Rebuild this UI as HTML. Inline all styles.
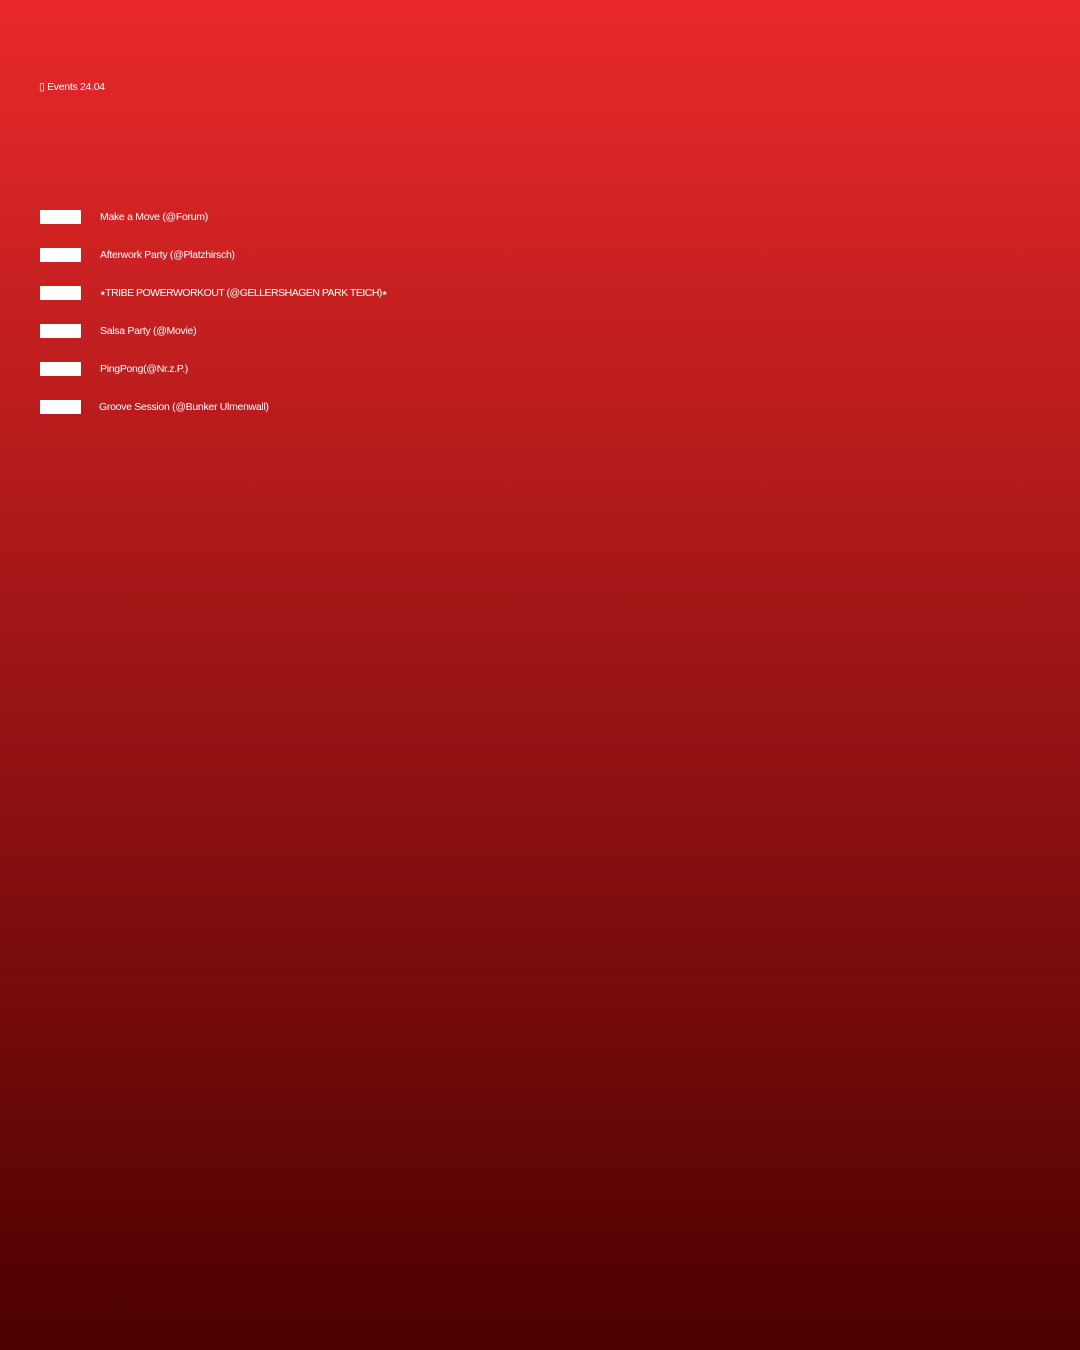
<!DOCTYPE html>
<html><head><style>
body{margin:0;width:1080px;height:1350px;background:linear-gradient(#ea292a,#4c0000);font-family:"Liberation Sans",sans-serif;color:#fff;position:relative;overflow:hidden}
.t{position:absolute;font-size:10.5px;letter-spacing:-0.3px;white-space:nowrap}
.r{position:absolute;left:40px;width:41px;height:14px;background:#fff}
</style></head><body>
<div class="t" style="left:39px;top:81px">▯ Events 24.04</div>
<div class="r" style="top:210px"></div><div class="t" style="left:100px;top:211px">Make a Move (@Forum)</div>
<div class="r" style="top:248px"></div><div class="t" style="left:100px;top:249px">Afterwork Party (@Platzhirsch)</div>
<div class="r" style="top:286px"></div><div class="t" style="left:100px;top:287px;letter-spacing:-0.5px">⭑TRIBE POWERWORKOUT (@GELLERSHAGEN PARK TEICH)⭑</div>
<div class="r" style="top:324px"></div><div class="t" style="left:100px;top:325px">Salsa Party (@Movie)</div>
<div class="r" style="top:362px"></div><div class="t" style="left:100px;top:363px">PingPong(@Nr.z.P.)</div>
<div class="r" style="top:400px"></div><div class="t" style="left:99px;top:401px">Groove Session (@Bunker Ulmenwall)</div>
</body></html>
